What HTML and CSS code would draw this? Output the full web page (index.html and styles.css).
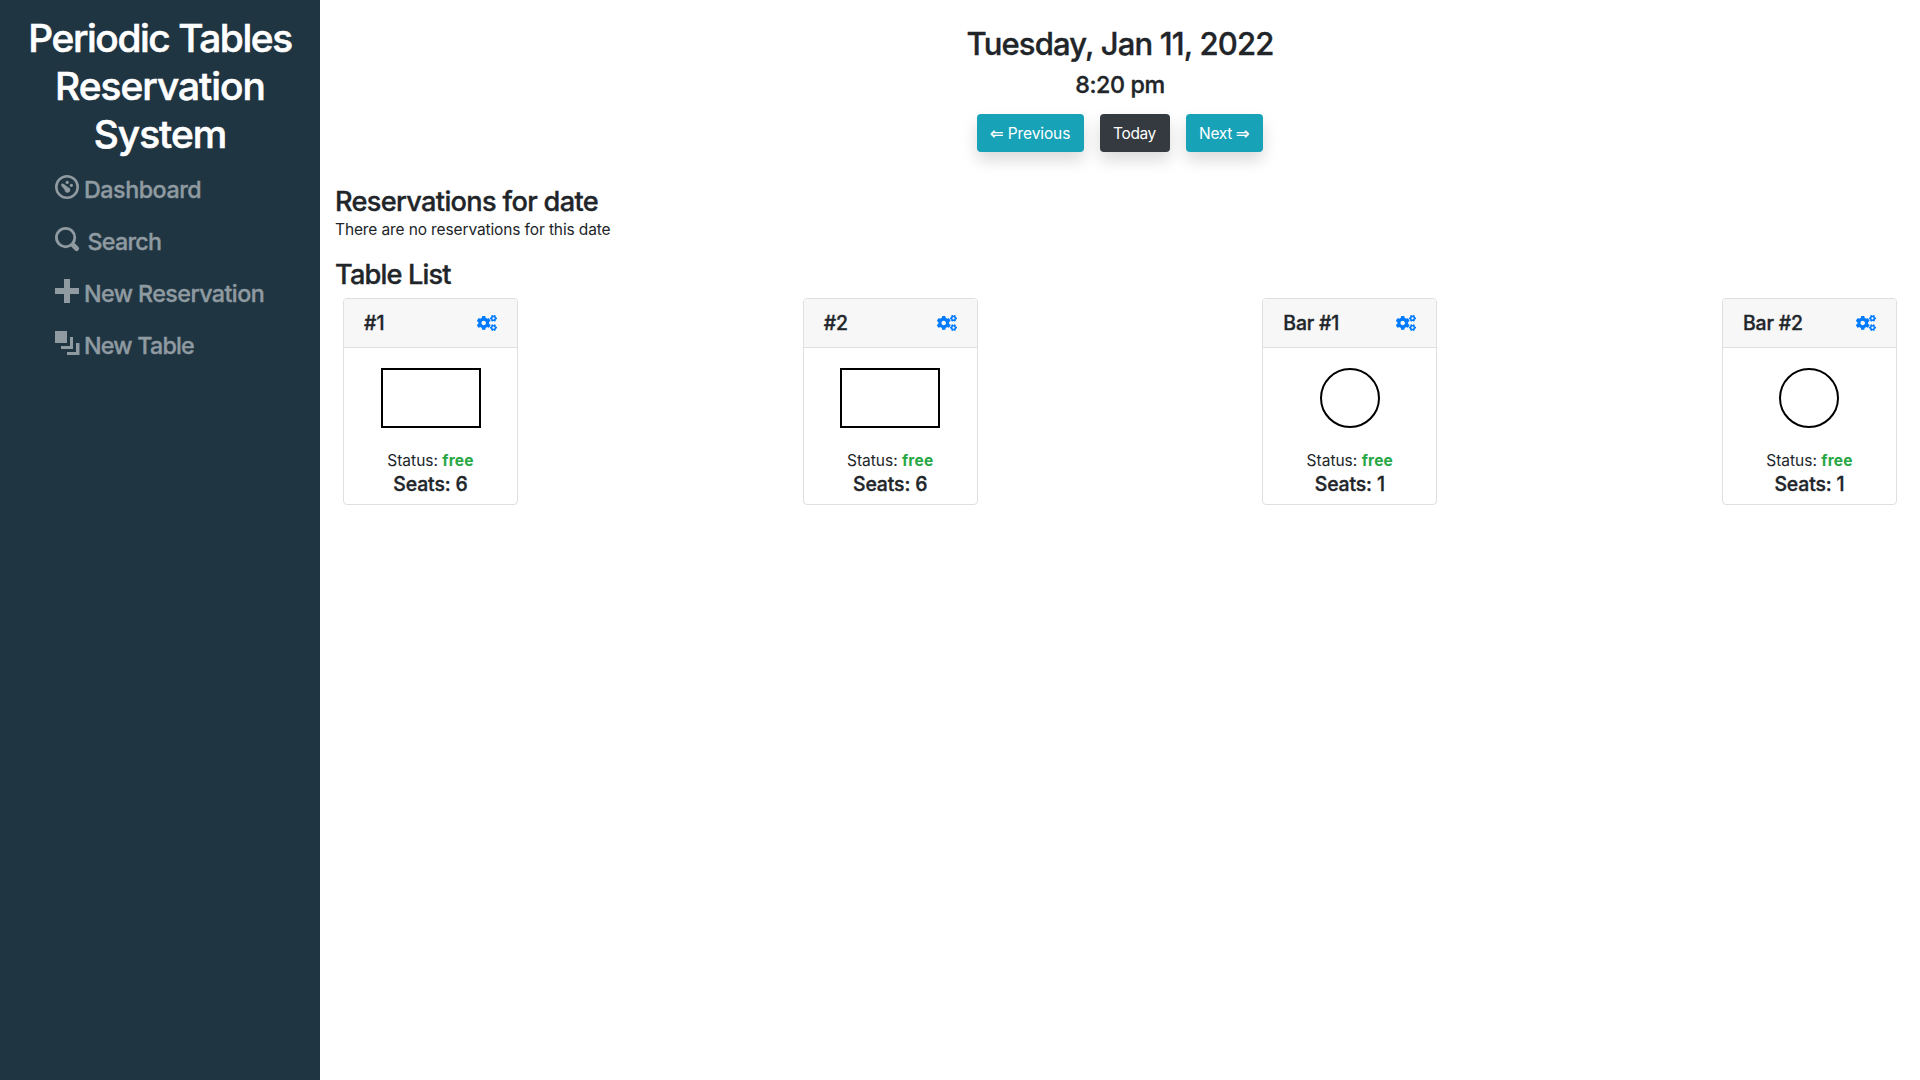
FILE: index.html
```
<!DOCTYPE html>
<html lang="en">
<head>
<meta charset="utf-8">
<title>Periodic Tables Reservation System</title>
<link rel="stylesheet" href="styles.css">
</head>
<body>
<svg class="sprite" aria-hidden="true">
  <symbol id="cogs" viewBox="0 0 640 512">
    <path id="small-cog" d="M512.1 191l-8.2 14.3c-3 5.3-9.4 7.5-15.1 5.4-11.8-4.4-22.6-10.7-32.1-18.6-4.6-3.8-5.8-10.5-2.8-15.7l8.2-14.3c-6.9-8-12.3-17.3-15.9-27.4h-16.5c-6 0-11.2-4.3-12.2-10.3-2-12-2.1-24.6 0-37.1 1-6 6.2-10.4 12.2-10.4h16.5c3.6-10.1 9-19.4 15.9-27.4l-8.2-14.3c-3-5.2-1.9-11.9 2.8-15.7 9.5-7.9 20.4-14.2 32.1-18.6 5.7-2.1 12.1.1 15.1 5.4l8.2 14.3c10.5-1.9 21.2-1.9 31.7 0L552 6.3c3-5.3 9.4-7.5 15.1-5.4 11.8 4.4 22.6 10.7 32.1 18.6 4.6 3.8 5.8 10.5 2.8 15.7l-8.2 14.3c6.9 8 12.3 17.3 15.9 27.4h16.5c6 0 11.2 4.3 12.2 10.3 2 12 2.1 24.6 0 37.1-1 6-6.2 10.4-12.2 10.4h-16.5c-3.6 10.1-9 19.4-15.9 27.4l8.2 14.3c3 5.2 1.9 11.9-2.8 15.7-9.5 7.9-20.4 14.2-32.1 18.6-5.7 2.1-12.1-.1-15.1-5.4l-8.2-14.3c-10.4 1.9-21.2 1.9-31.7 0zm-10.5-58.8c38.5 29.6 82.4-14.3 52.8-52.8-38.5-29.7-82.4 14.3-52.8 52.8z"/>
    <use href="#small-cog" y="299"/>
    <path d="M386.3 286.1l33.7 16.8c10.1 5.8 14.5 18.1 10.5 29.1-8.9 24.2-26.4 46.4-42.6 65.8-7.4 8.9-20.2 11.1-30.3 5.3l-29.1-16.8c-16 13.7-34.6 24.6-54.9 31.7v33.6c0 11.6-8.3 21.6-19.7 23.6-24.6 4.2-50.4 4.4-75.9 0-11.5-2-20-11.9-20-23.6V418c-20.3-7.2-38.9-18-54.9-31.7L74 403c-10 5.8-22.9 3.6-30.3-5.3-16.2-19.4-33.3-41.6-42.2-65.7-4-10.9.4-23.2 10.5-29.1l33.3-16.8c-3.9-20.9-3.9-42.4 0-63.4L12 205.8c-10.1-5.8-14.6-18.1-10.5-29 8.9-24.2 26-46.4 42.2-65.8 7.4-8.9 20.2-11.1 30.3-5.3l29.1 16.8c16-13.7 34.6-24.6 54.9-31.7V57.1c0-11.5 8.2-21.5 19.6-23.5 24.6-4.2 50.5-4.4 76-.1 11.5 2 20 11.9 20 23.6v33.6c20.3 7.2 38.9 18 54.9 31.7l29.1-16.8c10-5.8 22.9-3.6 30.3 5.3 16.2 19.4 33.2 41.6 42.1 65.8 4 10.9.1 23.2-10 29.1l-33.7 16.8c3.9 21 3.9 42.5 0 63.5zm-117.6 21.1c59.2-77-28.7-164.9-105.7-105.7-59.2 77 28.7 164.9 105.7 105.7z"/>
  </symbol>
</svg>
<div class="app">
  <aside class="sidebar">
    <h1 class="brand">Periodic Tables Reservation System</h1>
    <nav class="menu">
      <a class="menu-item">
        <svg class="menu-icon" viewBox="0 0 24 24"><circle cx="12" cy="12" r="10.7" fill="none" stroke="currentColor" stroke-width="2.6"/><circle cx="12.2" cy="7.4" r="1.6"/><circle cx="16.4" cy="10.3" r="1.6"/><path d="M6.2 9.600c.5-1.300 1.700-1.200 2.600-.5l4.200 3.200c1.800.3 2.700 1.800 2.200 3.400-.5 1.700-2.300 2.300-3.900 1.700-1.200-.5-1.700-1.500-1.700-2.700L6.700 11.300c-.5-.5-.7-1.100-.5-1.700z"/></svg>
        <span class="menu-text text-dashboard">Dashboard</span>
      </a>
      <a class="menu-item">
        <svg class="menu-icon" viewBox="0 0 24 24"><g fill="none" stroke="currentColor"><circle cx="10.6" cy="10.6" r="9.2" stroke-width="2.8"/><path d="M18.300 18.300l3.300 3.300" stroke-width="5" stroke-linecap="round"/></g></svg>
        <span class="menu-text text-search">Search</span>
      </a>
      <a class="menu-item">
        <svg class="menu-icon" viewBox="0 0 24 24"><path d="M9 0h6v9h9v6h-9v9H9v-9H0V9h9z"/></svg>
        <span class="menu-text text-reservation">New Reservation</span>
      </a>
      <a class="menu-item">
        <svg class="menu-icon" viewBox="0 0 24 24"><path d="M0 0h12v12H0zM15 6h3v12H6v-3h9zM21 12h3.500v12H12v-3h9z"/></svg>
        <span class="menu-text text-table">New Table</span>
      </a>
    </nav>
  </aside>
  <main class="content">
    <header class="day">
      <h2 class="day-date">Tuesday, Jan 11, 2022</h2>
      <h4 class="day-time">8:20 pm</h4>
      <div class="day-buttons">
        <button class="btn btn-info btn-prev"><span class="arrow">⇐</span><span>Previous</span></button>
        <button class="btn btn-dark">Today</button>
        <button class="btn btn-info btn-next"><span>Next</span><span class="arrow">⇒</span></button>
      </div>
    </header>
    <section class="reservations">
      <h3 class="heading">Reservations for date</h3>
      <p class="empty">There are no reservations for this date</p>
    </section>
    <section class="tables">
      <h3 class="heading heading-tables">Table List</h3>
      <div class="table-list">
        <article class="card">
          <div class="card-header"><span class="card-name name-short">#1</span><svg class="cogs"><use href="#cogs"/></svg></div>
          <div class="card-body"><div class="shape"></div><p class="status">Status: <b>free</b></p><p class="seats">Seats: 6</p></div>
        </article>
        <article class="card">
          <div class="card-header"><span class="card-name name-short">#2</span><svg class="cogs"><use href="#cogs"/></svg></div>
          <div class="card-body"><div class="shape"></div><p class="status">Status: <b>free</b></p><p class="seats">Seats: 6</p></div>
        </article>
        <article class="card">
          <div class="card-header"><span class="card-name">Bar #1</span><svg class="cogs"><use href="#cogs"/></svg></div>
          <div class="card-body"><div class="shape shape-round"></div><p class="status">Status: <b>free</b></p><p class="seats">Seats: 1</p></div>
        </article>
        <article class="card">
          <div class="card-header"><span class="card-name">Bar #2</span><svg class="cogs"><use href="#cogs"/></svg></div>
          <div class="card-body"><div class="shape shape-round"></div><p class="status">Status: <b>free</b></p><p class="seats">Seats: 1</p></div>
        </article>
      </div>
    </section>
  </main>
</div>
</body>
</html>
```
FILE: styles.css
```
* { box-sizing: border-box; }
body {
  margin: 0;
  font: 400 15.5px/24px Inter, "Liberation Sans", sans-serif;
  letter-spacing: -.12px;
  color: #212529;
  background: #fff;
}
h1, h2, h3, h4, p { margin: 0; font-weight: 500; }
h1, h2, h3, h4, .seats, .card-name, .menu-text { -webkit-text-stroke: .35px currentColor; }
.sprite { display: none; }
.app { display: flex; min-height: 100vh; }

.sidebar { width: 320px; flex: none; padding: 14px 15px 0; background: #203542; }
.brand {
  font-size: 38.8px;
  line-height: 48px;
  letter-spacing: -.97px;
  text-align: center;
  color: #fff;
  -webkit-text-stroke-width: .6px;
}
.brand::first-line { letter-spacing: -1.42px; }
.menu { display: flex; flex-direction: column; padding-left: 40px; margin-top: 3px; }
.menu-item { display: flex; align-items: center; height: 52px; color: #8f9aa1; }
.menu-icon { width: 24px; height: 24px; fill: currentColor; overflow: visible; }
.menu-text {
  font-size: 23.28px;
  font-weight: 500;
  line-height: 28px;
  padding-top: 6px;
  margin-left: 5px;
  white-space: nowrap;
}
.text-dashboard { letter-spacing: -.46px; }
.text-search { letter-spacing: -.73px; margin-left: 8.5px; }
.text-reservation { letter-spacing: -.57px; }
.text-table { letter-spacing: -.78px; }

.content { flex: 1; padding: 25px 15px 0; }
.day { display: flex; flex-direction: column; align-items: center; }
.day-date { font-size: 31.04px; line-height: 38px; letter-spacing: -.85px; }
.day-time { font-size: 23.28px; line-height: 29px; letter-spacing: -.39px; margin-top: 7px; }
.day-buttons { display: flex; gap: 16px; margin-top: 15px; }
.btn {
  display: flex;
  align-items: center;
  justify-content: center;
  gap: 4px;
  width: 70px;
  height: 38px;
  padding: 2px 1px 0 0;
  border: 0;
  border-radius: 4px;
  font: inherit;
  letter-spacing: -.4px;
  color: #fff;
  box-shadow: 0 8px 16px rgba(0, 0, 0, .15);
}
.btn-info { background: #17a2b8; }
.btn-dark { background: #343a40; }
.btn-prev { width: 107px; letter-spacing: -.1px; }
.btn-next { width: 77px; letter-spacing: -.36px; }
.arrow { width: 14px; font: 16px/24px "DejaVu Sans", sans-serif; letter-spacing: 0; -webkit-text-stroke: .3px currentColor; }
.btn-next .arrow { width: 13px; }

.reservations { margin-top: 33px; }
.heading { font-size: 27.16px; line-height: 33px; letter-spacing: -.67px; }
.heading-tables { line-height: 34px; letter-spacing: -.85px; }
.empty { font-weight: 400; }
.tables { margin-top: 16px; }
.table-list { display: flex; justify-content: space-between; padding: 6px 8px 0; }
.card { width: 175px; border: 1px solid #dfdfdf; border-radius: 4px; overflow: hidden; }
.card-header {
  display: flex;
  align-items: center;
  justify-content: space-between;
  height: 49px;
  padding: 0 20px;
  border-bottom: 1px solid #dfdfdf;
  background: #f7f7f7;
}
.card-name { font-size: 19.4px; font-weight: 500; letter-spacing: -.16px; }
.name-short { letter-spacing: 0; }
.cogs { width: 20px; height: 16px; fill: #007bff; }
.card-body { display: flex; flex-direction: column; align-items: center; padding: 20px 0 8px; }
.shape { width: 100px; height: 60px; margin-bottom: 21px; border: 2px solid #000; }
.shape-round { width: 60px; border-radius: 50%; }
.status { font-weight: 400; letter-spacing: 0; }
.status b { font-weight: 700; letter-spacing: .2px; color: #28a745; }
.seats { font-size: 19.4px; margin-top: -1px; }
```
